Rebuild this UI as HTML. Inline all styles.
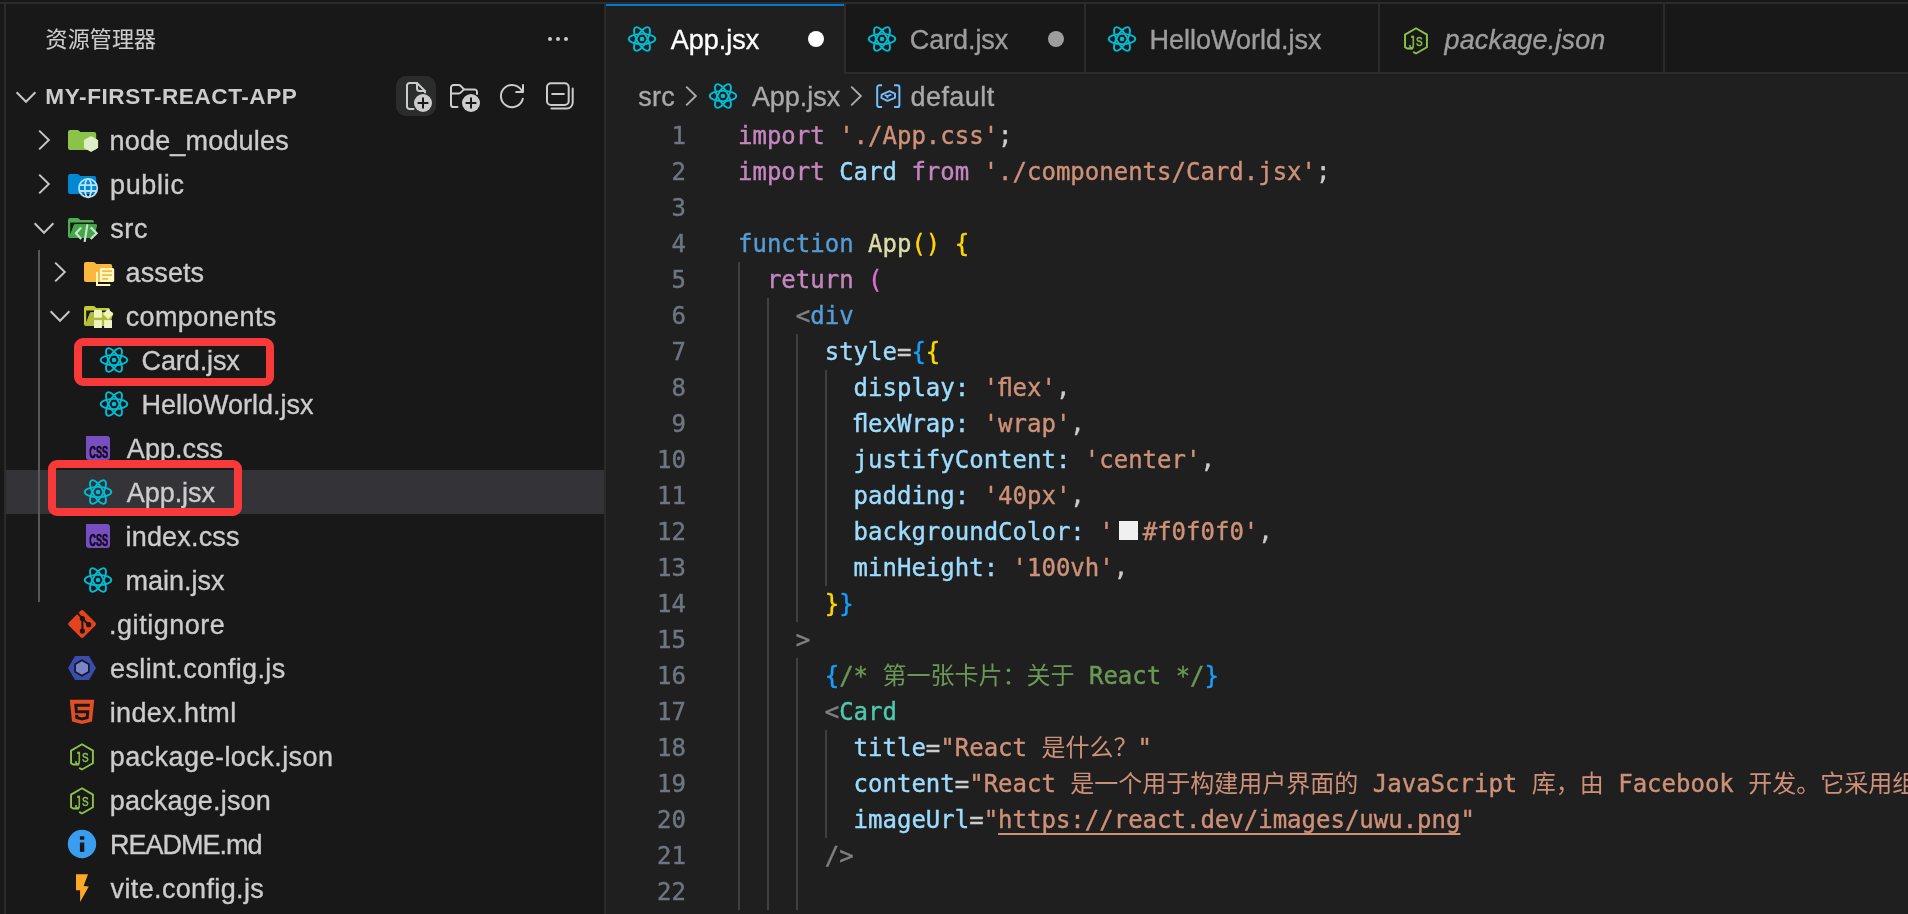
<!DOCTYPE html>
<html lang="zh-CN"><head><meta charset="utf-8"><title>my-first-react-app — App.jsx</title>
<style>
*{margin:0;padding:0;box-sizing:border-box}
html,body{width:1908px;height:914px;overflow:hidden;background:#181818}
body{position:relative;font-family:"Liberation Sans","Noto Sans CJK SC",sans-serif;color:#cccccc}
#root{position:absolute;left:0;top:0;width:1908px;height:914px;will-change:transform}
.abs,.ic,.t{position:absolute}
.ic{display:block;overflow:visible}
.t{height:44px;line-height:44px;font-size:27px;white-space:pre;color:#cccccc;-webkit-text-stroke:0.35px}
.code{position:absolute;left:738px;font-feature-settings:"dlig" 1;font-variant-ligatures:discretionary-ligatures;-webkit-text-stroke:0.4px;height:36px;line-height:36px;font-family:"DejaVu Sans Mono","Liberation Mono","Noto Sans CJK SC",monospace;font-size:24px;white-space:pre;color:#cccccc}
.ln{position:absolute;left:606px;width:80px;-webkit-text-stroke:0.4px;height:36px;line-height:36px;text-align:right;font-family:"DejaVu Sans Mono","Liberation Mono",monospace;font-size:24px;color:#6e7681}
.k{color:#c586c0}.s{color:#ce9178}.f{color:#569cd6}.fn{color:#dcdcaa}.v{color:#9cdcfe}
.b1{color:#ffd700}.b2{color:#da70d6}.b3{color:#179fff}.p{color:#808080}.c{color:#6a9955}.ty{color:#4ec9b0}
.u{text-decoration:underline;text-decoration-thickness:2px;text-underline-offset:5px}
.cj{-webkit-text-stroke:0}
.g{position:absolute;width:2px;background:#404040}
.sw{display:inline-block;width:19px;height:19px;margin:0 5px 0 5px;background:#f0f0f0;vertical-align:0px}
</style></head><body><div id="root">

<div class="abs" style="left:0;top:2px;width:1908px;height:2px;background:#2b2b2b"></div>
<div class="abs" style="left:4px;top:4px;width:2px;height:910px;background:#2b2b2b"></div>
<div class="abs" style="left:604px;top:4px;width:2px;height:910px;background:#2b2b2b"></div>
<div class="abs" style="left:606px;top:74px;width:1302px;height:840px;background:#1f1f1f"></div>
<div class="abs" style="left:606px;top:72px;width:1302px;height:2px;background:#2b2b2b"></div>
<div class="abs" style="left:606px;top:4px;width:238px;height:70px;background:#1f1f1f"></div>
<div class="abs" style="left:606px;top:4px;width:238px;height:2px;background:#0078d4"></div>
<div class="abs" style="left:844px;top:4px;width:2px;height:70px;background:#2b2b2b"></div>
<div class="abs" style="left:1084px;top:4px;width:2px;height:70px;background:#2b2b2b"></div>
<div class="abs" style="left:1378px;top:4px;width:2px;height:70px;background:#2b2b2b"></div>
<div class="abs" style="left:1663px;top:4px;width:2px;height:70px;background:#2b2b2b"></div>
<svg class="ic" style="left:626px;top:23px" width="32" height="32" viewBox="-16 -16 32 32"><g fill="none" stroke="#00bcd4" stroke-width="1.9"><ellipse rx="13.3" ry="5.1" transform="rotate(0)"/><ellipse rx="13.3" ry="5.1" transform="rotate(60)"/><ellipse rx="13.3" ry="5.1" transform="rotate(120)"/></g><circle r="2.3" fill="#00bcd4"/></svg>
<span id="t1" class="t " style="left:670.82px;top:18px;letter-spacing:-0.036px;color:#ffffff">App.jsx</span>
<div class="abs" style="left:808px;top:31px;width:16px;height:16px;border-radius:50%;background:#ffffff"></div>
<svg class="ic" style="left:866px;top:23px" width="32" height="32" viewBox="-16 -16 32 32"><g fill="none" stroke="#00bcd4" stroke-width="1.9"><ellipse rx="13.3" ry="5.1" transform="rotate(0)"/><ellipse rx="13.3" ry="5.1" transform="rotate(60)"/><ellipse rx="13.3" ry="5.1" transform="rotate(120)"/></g><circle r="2.3" fill="#00bcd4"/></svg>
<span id="t2" class="t " style="left:909.79px;top:18px;letter-spacing:-0.075px;color:#9d9d9d">Card.jsx</span>
<div class="abs" style="left:1048px;top:31px;width:16px;height:16px;border-radius:50%;background:#9d9d9d"></div>
<svg class="ic" style="left:1106px;top:23px" width="32" height="32" viewBox="-16 -16 32 32"><g fill="none" stroke="#00bcd4" stroke-width="1.9"><ellipse rx="13.3" ry="5.1" transform="rotate(0)"/><ellipse rx="13.3" ry="5.1" transform="rotate(60)"/><ellipse rx="13.3" ry="5.1" transform="rotate(120)"/></g><circle r="2.3" fill="#00bcd4"/></svg>
<span id="t3" class="t " style="left:1149.43px;top:18px;letter-spacing:-0.003px;color:#9d9d9d">HelloWorld.jsx</span>
<svg class="ic" style="left:1400px;top:24px" width="32" height="32" viewBox="0 0 32 32"><path d="M13.2 27.9 16 29.5 26.9 23.2V10.6L16 4.3 5.05 10.6V23.2L7.3 24.5H12.6" fill="none" stroke="#8bc34a" stroke-width="1.9" stroke-linejoin="miter"/><g font-family="Liberation Sans, sans-serif" font-size="13.6" fill="#8bc34a" stroke="#8bc34a" stroke-width="0.5"><text transform="translate(9.3 25.4) scale(0.8 1.4)">J</text><text transform="translate(15.9 21.8) scale(0.73 1)">S</text></g></svg>
<span id="t4" class="t " style="left:1444.54px;top:18px;letter-spacing:0.152px;color:#9d9d9d;font-style:italic">package.json</span>
<span id="t5" class="t " style="left:638.15px;top:75px;letter-spacing:0.322px;color:#a9a9a9">src</span>
<svg class="ic" style="left:675.3px;top:80px" width="32" height="32" viewBox="-16 -16 32 32"><path d="M-4.8 -9.4L4.8 0L-4.8 9.4" fill="none" stroke="#a9a9a9" stroke-width="2"/></svg>
<svg class="ic" style="left:707px;top:80px" width="32" height="32" viewBox="-16 -16 32 32"><g fill="none" stroke="#00bcd4" stroke-width="1.9"><ellipse rx="13.3" ry="5.1" transform="rotate(0)"/><ellipse rx="13.3" ry="5.1" transform="rotate(60)"/><ellipse rx="13.3" ry="5.1" transform="rotate(120)"/></g><circle r="2.3" fill="#00bcd4"/></svg>
<span id="t6" class="t " style="left:751.91px;top:75px;letter-spacing:-0.050px;color:#a9a9a9">App.jsx</span>
<svg class="ic" style="left:840.3px;top:80px" width="32" height="32" viewBox="-16 -16 32 32"><path d="M-4.8 -9.4L4.8 0L-4.8 9.4" fill="none" stroke="#a9a9a9" stroke-width="2"/></svg>
<svg class="ic" style="left:875px;top:84px" width="26" height="24" viewBox="0 0 26 24"><g fill="none" stroke="#75beff" stroke-width="2" stroke-linejoin="round" stroke-linecap="butt"><path d="M7.1 1.2H4.4A2.2 2.2 0 0 0 2.2 3.4V20.9A2.2 2.2 0 0 0 4.4 23.1H7.1M19.1 1.2H22.2A2.2 2.2 0 0 1 24.4 3.4V20.9A2.2 2.2 0 0 1 22.2 23.1H19.1"/><path d="M6.7 10.6 14.5 7.2 20 9.6V13.8L12.4 16.9 6.4 14Z" stroke-width="1.9"/><path d="M9.6 11.2 12.4 12.2 16.4 10.5M12.4 12.2V14.2" stroke-width="1.9"/></g></svg>
<span id="t7" class="t " style="left:910.44px;top:75px;letter-spacing:0.461px;color:#a9a9a9">default</span>
<span id="t8" class="t " style="left:45.60px;top:18px;letter-spacing:0.128px;font-size:22px;-webkit-text-stroke:0.1px">资源管理器</span>
<div class="abs" style="left:548px;top:37px;width:4px;height:4px;border-radius:50%;background:#cccccc"></div>
<div class="abs" style="left:556px;top:37px;width:4px;height:4px;border-radius:50%;background:#cccccc"></div>
<div class="abs" style="left:564px;top:37px;width:4px;height:4px;border-radius:50%;background:#cccccc"></div>
<svg class="ic" style="left:10px;top:80.5px" width="32" height="32" viewBox="-16 -16 32 32"><path d="M-9.4 -4.8L0 4.8L9.4 -4.8" fill="none" stroke="#c5c5c5" stroke-width="2.0"/></svg>
<span id="t9" class="t " style="left:45.35px;top:75px;letter-spacing:0.546px;font-size:22.6px;font-weight:700;-webkit-text-stroke:0">MY-FIRST-REACT-APP</span>
<div class="abs" style="left:396px;top:76px;width:40px;height:40px;border-radius:10px;background:#2b2c2c"></div>
<svg class="ic" style="left:404px;top:80px" width="32" height="36" viewBox="0 0 32 36"><g fill="none" stroke="#cccccc" stroke-width="2" stroke-linejoin="round" stroke-linecap="round"><path d="M9.5 29H5.6A2.6 2.6 0 0 1 3 26.4V5.6A2.6 2.6 0 0 1 5.6 3H13L21 11V12.5"/><path d="M13 3.4V8.6A2.4 2.4 0 0 0 15.4 11H20.6"/></g><circle cx="19" cy="23" r="9" fill="#cccccc"/><path d="M19 17.6V28.4M13.6 23H24.4" stroke="#181818" stroke-width="2" fill="none"/></svg>
<svg class="ic" style="left:448px;top:81px" width="34" height="34" viewBox="0 0 34 34"><g fill="none" stroke="#cccccc" stroke-width="2" stroke-linejoin="round" stroke-linecap="round"><path d="M9.5 26H5.6A2.6 2.6 0 0 1 3 23.400V6.600A2.600 2.600 0 0 1 5.600 4H10.600A2.600 2.600 0 0 1 12.500 4.800L16 8.400H26.400A2.600 2.600 0 0 1 29 11V13"/><path d="M3 12.4H10.8A2.600 2.600 0 0 0 12.700 11.600L16 8.400"/></g><circle cx="23" cy="22" r="9" fill="#cccccc"/><path d="M23 16.6V27.4M17.6 22H28.4" stroke="#181818" stroke-width="2" fill="none"/></svg>
<svg class="ic" style="left:0px;top:0px" width="600" height="120" viewBox="0 0 600 120"><g fill="none" stroke="#cccccc" stroke-width="2" stroke-linejoin="round" stroke-linecap="round"><path d="M523 84.2V92H515.4" stroke-linecap="butt"/><path d="M522.4 92.1A11.1 11.1 0 1 0 522.8 98.8"/></g></svg>
<svg class="ic" style="left:0px;top:0px" width="600" height="120" viewBox="0 0 600 120"><g fill="none" stroke="#cccccc" stroke-width="2" stroke-linejoin="round" stroke-linecap="round"><rect x="547" y="83.3" width="21.7" height="21.6" rx="4"/><path d="M552.2 94H563.8"/><path d="M572.7 88.6V102.6A6 6 0 0 1 566.7 108.6H551.4"/></g></svg>
<div class="abs" style="left:6px;top:470px;width:598px;height:44px;background:#333338"></div>
<div class="abs" style="left:38px;top:250px;width:2px;height:352px;background:#585858"></div>
<svg class="ic" style="left:28.1px;top:124px" width="32" height="32" viewBox="-16 -16 32 32"><path d="M-4.8 -9.4L4.8 0L-4.8 9.4" fill="none" stroke="#c5c5c5" stroke-width="2.0"/></svg>
<svg class="ic" style="left:66px;top:124px" width="32" height="32" viewBox="0 0 32 32"><path d="M4 6H11.4a2 2 0 0 1 1.3.5L14.4 7.9H28.2a2 2 0 0 1 2 2V24a2 2 0 0 1-2 2H4a2 2 0 0 1-2-2V8a2 2 0 0 1 2-2Z" fill="#8bc34a"/><path d="M25.05 12 32.1 16V24L25.05 28 18 24V16Z" fill="#dcedc8"/></svg>
<span id="t10" class="t " style="left:109.57px;top:119px;letter-spacing:0.176px;">node_modules</span>
<svg class="ic" style="left:28.1px;top:168px" width="32" height="32" viewBox="-16 -16 32 32"><path d="M-4.8 -9.4L4.8 0L-4.8 9.4" fill="none" stroke="#c5c5c5" stroke-width="2.0"/></svg>
<svg class="ic" style="left:66px;top:168px" width="32" height="32" viewBox="0 0 32 32"><path d="M4 6H11.4a2 2 0 0 1 1.3.5L14.4 7.9H28.2a2 2 0 0 1 2 2V24a2 2 0 0 1-2 2H4a2 2 0 0 1-2-2V8a2 2 0 0 1 2-2Z" fill="#0288d1"/><g fill="none" stroke="#b3e5fc" stroke-width="1.8"><circle cx="22.1" cy="20.1" r="9.2"/><ellipse cx="22.1" cy="20.1" rx="3.3" ry="9.2"/><path d="M13.5 17.2H30.7M13.5 23H30.7"/></g></svg>
<span id="t11" class="t " style="left:109.90px;top:163px;letter-spacing:0.721px;">public</span>
<svg class="ic" style="left:28px;top:212px" width="32" height="32" viewBox="-16 -16 32 32"><path d="M-9.4 -4.8L0 4.8L9.4 -4.8" fill="none" stroke="#c5c5c5" stroke-width="2.0"/></svg>
<svg class="ic" style="left:66px;top:212px" width="32" height="32" viewBox="0 0 32 32"><path d="M4 6H11.4a2 2 0 0 1 1.3.5L14.4 7.9H26a2 2 0 0 1 2 2V10.4H4.2V22.8L7.7 13.6a2 2 0 0 1 1.9-1.3H29.5a1.4 1.4 0 0 1 1.3 1.9L27.7 24.7a2 2 0 0 1-1.9 1.3H4a2 2 0 0 1-2-2V8a2 2 0 0 1 2-2Z" fill="#4caf50"/><path d="M4.2 26 3.2 25.4 7.7 13.6a2 2 0 0 1 1.9-1.3H29.5a1.4 1.4 0 0 1 1.3 1.9L27.7 24.7a2 2 0 0 1-1.9 1.3Z" fill="#46a54b"/><g fill="none" stroke="#c8e6c9" stroke-width="2.2" stroke-linejoin="miter"><path d="M15.2 15.4 9.9 21.2 15.2 27M24.7 15.4 30.6 21.2 24.7 27M21.4 12.4 18.6 29.8"/></g></svg>
<span id="t12" class="t " style="left:110.15px;top:207px;letter-spacing:0.708px;">src</span>
<svg class="ic" style="left:44.1px;top:256px" width="32" height="32" viewBox="-16 -16 32 32"><path d="M-4.8 -9.4L4.8 0L-4.8 9.4" fill="none" stroke="#c5c5c5" stroke-width="2.0"/></svg>
<svg class="ic" style="left:82px;top:256px" width="32" height="32" viewBox="0 0 32 32"><path d="M4 6H11.4a2 2 0 0 1 1.3.5L14.4 7.9H28.2a2 2 0 0 1 2 2V24a2 2 0 0 1-2 2H4a2 2 0 0 1-2-2V8a2 2 0 0 1 2-2Z" fill="#fcb73e"/><path d="M14 16H16V28H28.3V30H14Z" fill="#fff9c4"/><rect x="17.9" y="12" width="14.3" height="14" rx="1.6" fill="#fff9c4"/><path d="M20.2 14.2H30V16H20.2ZM20.2 18.2H30V19.9H20.2ZM20.2 22.1H26.1V23.8H20.2Z" fill="#fcb73e"/></svg>
<span id="t13" class="t " style="left:125.62px;top:251px;letter-spacing:0.091px;">assets</span>
<svg class="ic" style="left:44px;top:300px" width="32" height="32" viewBox="-16 -16 32 32"><path d="M-9.4 -4.8L0 4.8L9.4 -4.8" fill="none" stroke="#c5c5c5" stroke-width="2.0"/></svg>
<svg class="ic" style="left:82px;top:300px" width="32" height="32" viewBox="0 0 32 32"><path d="M4 6H11.4a2 2 0 0 1 1.3.5L14.4 7.9H26a2 2 0 0 1 2 2V10.4H4.2V22.8L7.7 13.6a2 2 0 0 1 1.9-1.3H29.5a1.4 1.4 0 0 1 1.3 1.9L27.7 24.7a2 2 0 0 1-1.9 1.3H4a2 2 0 0 1-2-2V8a2 2 0 0 1 2-2Z" fill="#c3cd34"/><path d="M4.2 26 3.2 25.4 7.7 13.6a2 2 0 0 1 1.9-1.3H29.5a1.4 1.4 0 0 1 1.3 1.9L27.7 24.7a2 2 0 0 1-1.9 1.3Z" fill="#b1bb3a"/><g fill="#f0f4c3"><rect x="12" y="10" width="7.9" height="7.7"/><rect x="12" y="20.1" width="7.9" height="7.9"/><rect x="22.1" y="20.1" width="7.9" height="7.9"/><path d="M26.2 8.8 31.4 14 26.2 19.2 21 14Z"/></g></svg>
<span id="t14" class="t " style="left:125.64px;top:295px;letter-spacing:0.402px;">components</span>
<svg class="ic" style="left:98px;top:344px" width="32" height="32" viewBox="-16 -16 32 32"><g fill="none" stroke="#00bcd4" stroke-width="1.9"><ellipse rx="13.3" ry="5.1" transform="rotate(0)"/><ellipse rx="13.3" ry="5.1" transform="rotate(60)"/><ellipse rx="13.3" ry="5.1" transform="rotate(120)"/></g><circle r="2.3" fill="#00bcd4"/></svg>
<span id="t15" class="t " style="left:141.52px;top:339px;letter-spacing:-0.103px;">Card.jsx</span>
<svg class="ic" style="left:98px;top:388px" width="32" height="32" viewBox="-16 -16 32 32"><g fill="none" stroke="#00bcd4" stroke-width="1.9"><ellipse rx="13.3" ry="5.1" transform="rotate(0)"/><ellipse rx="13.3" ry="5.1" transform="rotate(60)"/><ellipse rx="13.3" ry="5.1" transform="rotate(120)"/></g><circle r="2.3" fill="#00bcd4"/></svg>
<span id="t16" class="t " style="left:141.39px;top:383px;letter-spacing:0.010px;">HelloWorld.jsx</span>
<svg class="ic" style="left:86px;top:436px" width="24" height="24" viewBox="0 0 24 24"><path d="M0 0H21a3 3 0 0 1 3 3V21a3 3 0 0 1-3 3H3a3 3 0 0 1-3-3Z" fill="#774fc0"/><text transform="translate(3.3 22.2) scale(0.735 1.36)" font-family="Liberation Sans, sans-serif" font-weight="700" font-size="12.5" fill="#130b1f" stroke="#130b1f" stroke-width="0.5">CSS</text></svg>
<span id="t17" class="t " style="left:126.87px;top:427px;letter-spacing:0.032px;">App.css</span>
<svg class="ic" style="left:82px;top:476px" width="32" height="32" viewBox="-16 -16 32 32"><g fill="none" stroke="#00bcd4" stroke-width="1.9"><ellipse rx="13.3" ry="5.1" transform="rotate(0)"/><ellipse rx="13.3" ry="5.1" transform="rotate(60)"/><ellipse rx="13.3" ry="5.1" transform="rotate(120)"/></g><circle r="2.3" fill="#00bcd4"/></svg>
<span id="t18" class="t " style="left:126.87px;top:471px;letter-spacing:-0.081px;">App.jsx</span>
<svg class="ic" style="left:86px;top:524px" width="24" height="24" viewBox="0 0 24 24"><path d="M0 0H21a3 3 0 0 1 3 3V21a3 3 0 0 1-3 3H3a3 3 0 0 1-3-3Z" fill="#774fc0"/><text transform="translate(3.3 22.2) scale(0.735 1.36)" font-family="Liberation Sans, sans-serif" font-weight="700" font-size="12.5" fill="#130b1f" stroke="#130b1f" stroke-width="0.5">CSS</text></svg>
<span id="t19" class="t " style="left:125.57px;top:515px;letter-spacing:0.175px;">index.css</span>
<svg class="ic" style="left:82px;top:564px" width="32" height="32" viewBox="-16 -16 32 32"><g fill="none" stroke="#00bcd4" stroke-width="1.9"><ellipse rx="13.3" ry="5.1" transform="rotate(0)"/><ellipse rx="13.3" ry="5.1" transform="rotate(60)"/><ellipse rx="13.3" ry="5.1" transform="rotate(120)"/></g><circle r="2.3" fill="#00bcd4"/></svg>
<span id="t20" class="t " style="left:125.57px;top:559px;letter-spacing:-0.003px;">main.jsx</span>
<svg class="ic" style="left:66px;top:608px" width="32" height="32" viewBox="0 0 32 32"><rect x="5.6" y="5.5" width="21" height="21" rx="2.2" transform="rotate(45 16.1 16)" fill="#e4431d"/><g stroke="#181818" stroke-width="2" fill="none"><path d="M11 4.6 16.4 10.4V23M16.4 10.6 22.6 16.7"/></g><g fill="#181818"><circle cx="16.4" cy="10.6" r="2.6"/><circle cx="16.4" cy="23.1" r="2.6"/><circle cx="22.7" cy="16.7" r="2.6"/></g></svg>
<span id="t21" class="t " style="left:109.07px;top:603px;letter-spacing:0.522px;">.gitignore</span>
<svg class="ic" style="left:66px;top:652px" width="32" height="32" viewBox="0 0 32 32"><path d="M9 3.9H23L30 16 23 28.1H9L2 16Z" fill="#3b4cb0"/><path d="M16 8.3 22.9 12.2V19.8L16 23.7 9.1 19.8V12.2Z" fill="#7986cb" stroke="#181818" stroke-width="1.7" stroke-linejoin="miter"/></svg>
<span id="t22" class="t " style="left:110.11px;top:647px;letter-spacing:0.369px;">eslint.config.js</span>
<svg class="ic" style="left:66px;top:696px" width="32" height="32" viewBox="0 0 32 32"><path d="M3.8 3.7H28.2L26 25.4 16 28.1 6 25.4Z" fill="#e44d26"/><path d="M8.2 7.8H24L23.7 10.8H11.4L11.7 14.2H23.4L22.6 22.7 16 24.6 9.4 22.7 9.1 18.8H12.1L12.3 20.4 16 21.5 19.7 20.4 20.1 17.2H9Z" fill="#181818"/></svg>
<span id="t23" class="t " style="left:109.67px;top:691px;letter-spacing:0.381px;">index.html</span>
<svg class="ic" style="left:66px;top:740px" width="32" height="32" viewBox="0 0 32 32"><path d="M13.2 27.9 16 29.5 26.9 23.2V10.6L16 4.3 5.05 10.6V23.2L7.3 24.5H12.6" fill="none" stroke="#8bc34a" stroke-width="1.9" stroke-linejoin="miter"/><g font-family="Liberation Sans, sans-serif" font-size="13.6" fill="#8bc34a" stroke="#8bc34a" stroke-width="0.5"><text transform="translate(9.3 25.4) scale(0.8 1.4)">J</text><text transform="translate(15.9 21.8) scale(0.73 1)">S</text></g></svg>
<span id="t24" class="t " style="left:109.70px;top:735px;letter-spacing:0.452px;">package-lock.json</span>
<svg class="ic" style="left:66px;top:784px" width="32" height="32" viewBox="0 0 32 32"><path d="M13.2 27.9 16 29.5 26.9 23.2V10.6L16 4.3 5.05 10.6V23.2L7.3 24.5H12.6" fill="none" stroke="#8bc34a" stroke-width="1.9" stroke-linejoin="miter"/><g font-family="Liberation Sans, sans-serif" font-size="13.6" fill="#8bc34a" stroke="#8bc34a" stroke-width="0.5"><text transform="translate(9.3 25.4) scale(0.8 1.4)">J</text><text transform="translate(15.9 21.8) scale(0.73 1)">S</text></g></svg>
<span id="t25" class="t " style="left:109.70px;top:779px;letter-spacing:0.184px;">package.json</span>
<svg class="ic" style="left:66px;top:828px" width="32" height="32" viewBox="0 0 32 32"><circle cx="16" cy="16" r="14.2" fill="#3a9ef0"/><rect x="13.9" y="14.5" width="4.4" height="9.4" fill="#181818"/><rect x="13.9" y="8.3" width="4.4" height="3.4" fill="#181818"/></svg>
<span id="t26" class="t " style="left:109.91px;top:823px;letter-spacing:-0.986px;">README.md</span>
<svg class="ic" style="left:66px;top:872px" width="32" height="32" viewBox="0 0 32 32"><path d="M10 2.2H22L17.6 14 22.8 14.5 14.1 30V18.2H10Z" fill="#ffa726"/></svg>
<span id="t27" class="t " style="left:110.58px;top:867px;letter-spacing:0.359px;">vite.config.js</span>
<div class="abs" style="left:74px;top:338px;width:200px;height:48px;border:8px solid #f8393a;border-radius:9px"></div>
<div class="abs" style="left:48px;top:460px;width:194px;height:56px;border:8px solid #f8393a;border-radius:9px"></div>
<div class="ln" style="top:118px">1</div>
<div class="code" style="top:118px"><span class="k">import</span> <span class="s">'./App.css'</span>;</div>
<div class="ln" style="top:154px">2</div>
<div class="code" style="top:154px"><span class="k">import</span> <span class="v">Card</span> <span class="k">from</span> <span class="s">'./components/Card.jsx'</span>;</div>
<div class="ln" style="top:190px">3</div>
<div class="ln" style="top:226px">4</div>
<div class="code" style="top:226px"><span class="f">function</span> <span class="fn">App</span><span class="b1">()</span> <span class="b1">{</span></div>
<div class="ln" style="top:262px">5</div>
<div class="code" style="top:262px">  <span class="k">return</span> <span class="b2">(</span></div>
<div class="ln" style="top:298px">6</div>
<div class="code" style="top:298px">    <span class="p">&lt;</span><span class="f">div</span></div>
<div class="ln" style="top:334px">7</div>
<div class="code" style="top:334px">      <span class="v">style</span>=<span class="b3">{</span><span class="b1">{</span></div>
<div class="ln" style="top:370px">8</div>
<div class="code" style="top:370px">        <span class="v">display:</span> <span class="s">'flex'</span>,</div>
<div class="ln" style="top:406px">9</div>
<div class="code" style="top:406px">        <span class="v">flexWrap:</span> <span class="s">'wrap'</span>,</div>
<div class="ln" style="top:442px">10</div>
<div class="code" style="top:442px">        <span class="v">justifyContent:</span> <span class="s">'center'</span>,</div>
<div class="ln" style="top:478px">11</div>
<div class="code" style="top:478px">        <span class="v">padding:</span> <span class="s">'40px'</span>,</div>
<div class="ln" style="top:514px">12</div>
<div class="code" style="top:514px">        <span class="v">backgroundColor:</span> <span class="s">'<span class="sw"></span>#f0f0f0'</span>,</div>
<div class="ln" style="top:550px">13</div>
<div class="code" style="top:550px">        <span class="v">minHeight:</span> <span class="s">'100vh'</span>,</div>
<div class="ln" style="top:586px">14</div>
<div class="code" style="top:586px">      <span class="b1">}</span><span class="b3">}</span></div>
<div class="ln" style="top:622px">15</div>
<div class="code" style="top:622px">    <span class="p">&gt;</span></div>
<div class="ln" style="top:658px">16</div>
<div class="code" style="top:658px">      <span class="b3">{</span><span class="c">/* <span class="cj">第一张卡片：关于</span> React */</span><span class="b3">}</span></div>
<div class="ln" style="top:694px">17</div>
<div class="code" style="top:694px">      <span class="p">&lt;</span><span class="ty">Card</span></div>
<div class="ln" style="top:730px">18</div>
<div class="code" style="top:730px">        <span class="v">title</span>=<span class="s">"React <span class="cj">是什么？</span>"</span></div>
<div class="ln" style="top:766px">19</div>
<div class="code" style="top:766px">        <span class="v">content</span>=<span class="s">"React <span class="cj">是一个用于构建用户界面的</span> JavaScript <span class="cj">库，由</span> Facebook <span class="cj">开发。它采用组件化的开发模式。</span>"</span></div>
<div class="ln" style="top:802px">20</div>
<div class="code" style="top:802px">        <span class="v">imageUrl</span>=<span class="s">"<span class="u">https://react.dev/images/uwu.png</span>"</span></div>
<div class="ln" style="top:838px">21</div>
<div class="code" style="top:838px">      <span class="p">/&gt;</span></div>
<div class="ln" style="top:874px">22</div>
<div class="g" style="left:738px;top:262px;height:648px;background:#404040"></div>
<div class="g" style="left:767px;top:298px;height:612px;background:#404040"></div>
<div class="g" style="left:796px;top:334px;height:288px;background:#404040"></div>
<div class="g" style="left:796px;top:658px;height:252px;background:#404040"></div>
<div class="g" style="left:825px;top:370px;height:216px;background:#404040"></div>
<div class="g" style="left:825px;top:730px;height:108px;background:#404040"></div>
</div></body></html>
